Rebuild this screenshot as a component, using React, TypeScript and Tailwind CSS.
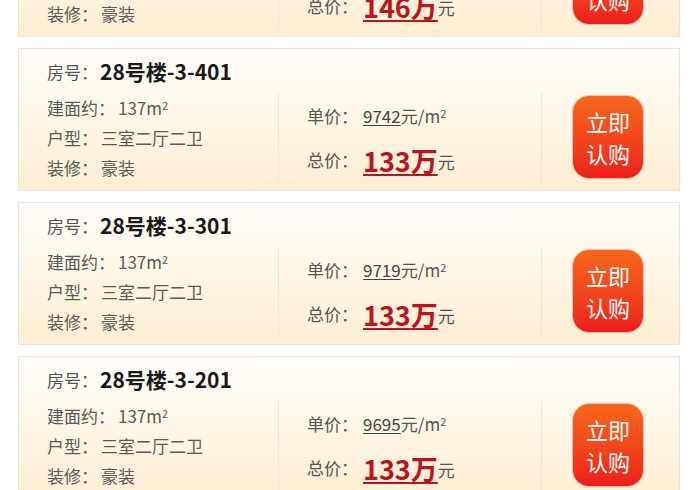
const houses = [
  {room:"28号楼-3-501",area:"137",layout:"三室二厅二卫",deco:"豪装",unit:"10674",total:"146"},
  {room:"28号楼-3-401",area:"137",layout:"三室二厅二卫",deco:"豪装",unit:"9742",total:"133"},
  {room:"28号楼-3-301",area:"137",layout:"三室二厅二卫",deco:"豪装",unit:"9719",total:"133"},
  {room:"28号楼-3-201",area:"137",layout:"三室二厅二卫",deco:"豪装",unit:"9695",total:"133"},
]

const HouseCard = ({d}:{d:any}) => {
  return <div className="ml-[18px] mr-[20px] h-[143px] border border-[#e6e4e0] bg-linear-to-b from-[#fffdfa] to-[#fdeed3] pt-[9px] pb-[7px] flex flex-col">
    <div className="h-[28px] flex items-center pl-[28px]">
      <span className="text-[17px] text-[#555] mr-[2px]">房号：</span>
      <span className="text-[21px] font-bold text-[#1a1a1a]">{d.room}</span>
    </div>
    <div className="mt-[7px] h-[90px] flex">
      <div className="w-[260px] pl-[28px] border-r border-[#ebe5dc] text-[17px] text-[#5a5a5a] flex flex-col">
        <p className="h-[30px] leading-[30px]"><span className="mr-[3px]">建面约：</span>{d.area}m<sup className="text-[11px]">2</sup></p>
        <p className="h-[30px] leading-[30px]"><span className="mr-[3px]">户型：</span>{d.layout}</p>
        <p className="h-[30px] leading-[30px]"><span className="mr-[3px]">装修：</span>{d.deco}</p>
      </div>
      <div className="w-[263px] pl-[28px] border-r border-[#ebe5dc] flex flex-col justify-center gap-[16px] pt-[4px]">
        <div className="h-[24px] flex items-center text-[17px] text-[#555]">
          <span className="mr-[5px]">单价：</span>
          <span className="text-[#444] underline underline-offset-2">{d.unit}</span>
          <span>元/m<sup className="text-[11px]">2</sup></span>
        </div>
        <div className="h-[32px] flex items-center text-[17px] text-[#555]">
          <span className="mr-[5px]">总价：</span>
          <span className="text-[27px] font-bold text-[#bb141f] underline underline-offset-2 leading-none">{d.total}万</span>
          <span className="self-end mb-[2px]">元</span>
        </div>
      </div>
      <div className="flex-1 flex items-center pl-[31px]">
        <button className="w-[70px] h-[82px] -mt-[3px] rounded-[16px] bg-linear-to-b from-[#f6661d] to-[#ec1a1c] text-white text-[22px] leading-[32px] flex flex-col items-center justify-center shadow-[0_0_0_1px_rgba(240,90,60,0.35)]">
          <span>立即</span>
          <span>认购</span>
        </button>
      </div>
    </div>
  </div>
}

export default function App() {
  return <div className="w-[700px] h-[490px] overflow-hidden bg-white" style={{fontFamily:'"Noto Sans CJK SC", "Noto Sans", sans-serif'}}>
    <div className="-mt-[106px] flex flex-col gap-[11px]">
      {houses.map((d,index) => <HouseCard key={index} d={d}/>)}
    </div>
  </div>
}
